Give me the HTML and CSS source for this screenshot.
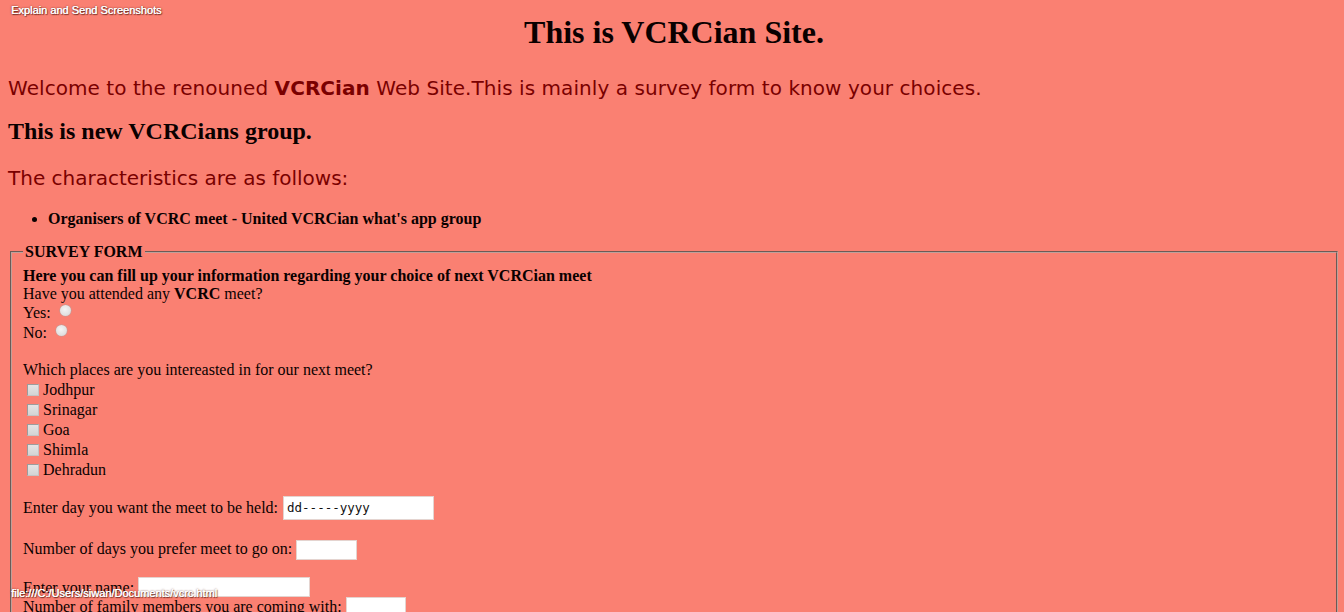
FILE: index.html
```html
<!DOCTYPE html>
<html>
<head>
<meta charset="utf-8">
<title>VCRCian Site</title>
<link rel="stylesheet" href="styles.css">
</head>
<body>
<div class="page">
  <h1 class="title">This is VCRCian Site.</h1>
  <p class="welcome">Welcome to the renouned <b>VCRCian</b> Web Site.This is mainly a survey form to know your choices.</p>
  <h2 class="group">This is new VCRCians group.</h2>
  <p class="chars">The characteristics are as follows:</p>
  <ul class="list">
    <li>Organisers of VCRC meet - United VCRCian what's app group</li>
  </ul>
  <fieldset class="survey">
    <legend class="legend">SURVEY FORM</legend>
    <div class="row h18"><b>Here you can fill up your information regarding your choice of next VCRCian meet</b></div>
    <div class="row h19">Have you attended any <b>VCRC</b> meet?</div>
    <div class="row">Yes: <span class="radio"></span></div>
    <div class="row">No: <span class="radio"></span></div>
    <div class="row gap17">Which places are you intereasted in for our next meet?</div>
    <div class="row"><span class="check"></span>Jodhpur</div>
    <div class="row"><span class="check"></span>Srinagar</div>
    <div class="row"><span class="check"></span>Goa</div>
    <div class="row"><span class="check"></span>Shimla</div>
    <div class="row"><span class="check"></span>Dehradun</div>
    <div class="row gap17">Enter day you want the meet to be held: <span class="field date">dd-----yyyy</span></div>
    <div class="row gap22">Number of days you prefer meet to go on: <span class="field num"></span></div>
    <div class="row gap19">Enter your name: <span class="field name"></span></div>
    <div class="row gapm1">Number of family members you are coming with: <span class="field fam"></span></div>
  </fieldset>
</div>
<div class="ext">Explain and Send Screenshots</div>
<div class="status">file:///C:/Users/siwan/Documents/vcrc.html</div>
</body>
</html>
```
FILE: styles.css
```css
html, body {
  margin: 0;
  padding: 0;
  height: 612px;
  overflow: hidden;
}
body {
  background: #fa8072;
  font-family: "Liberation Serif", "Times New Roman", serif;
  font-size: 16px;
  color: #000;
}
.page {
  padding: 0 8px;
}
.title {
  margin: 14px 0 0;
  padding-left: 4px;
  font-size: 32px;
  line-height: 37px;
  text-align: center;
  color: #0a0000;
}
.welcome, .chars {
  font-family: "DejaVu Sans", Verdana, sans-serif;
  font-size: 20px;
  line-height: 23px;
  color: #7a0000;
  margin: 0;
}
.welcome {
  margin-top: 26px;
  letter-spacing: 0.06px;
}
.group {
  margin: 17px 0 0;
  font-size: 24px;
  line-height: 28px;
  color: #0a0000;
}
.chars { margin-top: 22px; }
.list {
  margin: 20px 0 15px;
  padding-left: 40px;
  font-weight: bold;
  line-height: 18px;
  color: #0a0000;
}
.survey {
  margin: 0 -2px 0 2px;
  padding: 5px 12px 10px 11px;
  border: 2px groove #c0a09a;
  color: #0a0000;
}
.legend {
  padding: 0 2px;
  font-weight: bold;
  line-height: 18px;
}
.row {
  height: 20px;
  line-height: 20px;
  white-space: nowrap;
}
.h18 { height: 18px; line-height: 20px; }
.h19 { height: 19px; line-height: 20px; }
.gap17 { margin-top: 17px; }
.gap22 { margin-top: 22px; }
.gap19 { margin-top: 19px; }
.gapm1 { margin-top: -1px; }
.radio {
  display: inline-block;
  width: 11px;
  height: 11px;
  margin-left: 5px;
  border-radius: 50%;
  vertical-align: 2px;
  background: radial-gradient(circle at 45% 40%, #f4f4f4 0%, #e2e2e2 60%, #c8c8c8 100%);
  box-shadow: 0 0 0 0.5px #b0a0a0;
}
.check {
  display: inline-block;
  box-sizing: border-box;
  width: 12px;
  height: 12px;
  margin: 0 4px 0 4px;
  vertical-align: -1px;
  background: linear-gradient(#e4e4e4, #d4d4d4);
  border-top: 1px solid #9c9c9c;
  border-left: 1px solid #9c9c9c;
  border-right: 1px solid #c4c4c4;
  border-bottom: 1px solid #c4c4c4;
}
.field {
  display: inline-block;
  box-sizing: border-box;
  background: #fff;
  border: 1px solid #e4d4d0;
  vertical-align: middle;
  position: relative;
}
.date {
  width: 151px;
  height: 24px;
  margin-left: 1px;
  padding-left: 3px;
  font-family: "DejaVu Sans Mono", monospace;
  font-size: 12.5px;
  line-height: 22px;
  color: #111;
  top: -1px;
}
.num {
  width: 61px;
  height: 20px;
  margin-left: 0;
  top: 0;
}
.name {
  width: 172px;
  height: 20px;
  margin-left: 0;
  top: -2px;
}
.fam {
  width: 60px;
  height: 20px;
  margin-left: 0;
  top: -1px;
}
.ext, .status {
  position: absolute;
  left: 11px;
  font-family: "Liberation Sans", Arial, sans-serif;
  font-size: 11px;
  font-weight: normal;
  color: #fff;
  text-shadow: 0.4px 0 0 #fff, 0 0 2px #5a201a, 1px 1px 1px #6b2820;
}
.ext { top: 4px; }
.status { top: 587px; }
```
